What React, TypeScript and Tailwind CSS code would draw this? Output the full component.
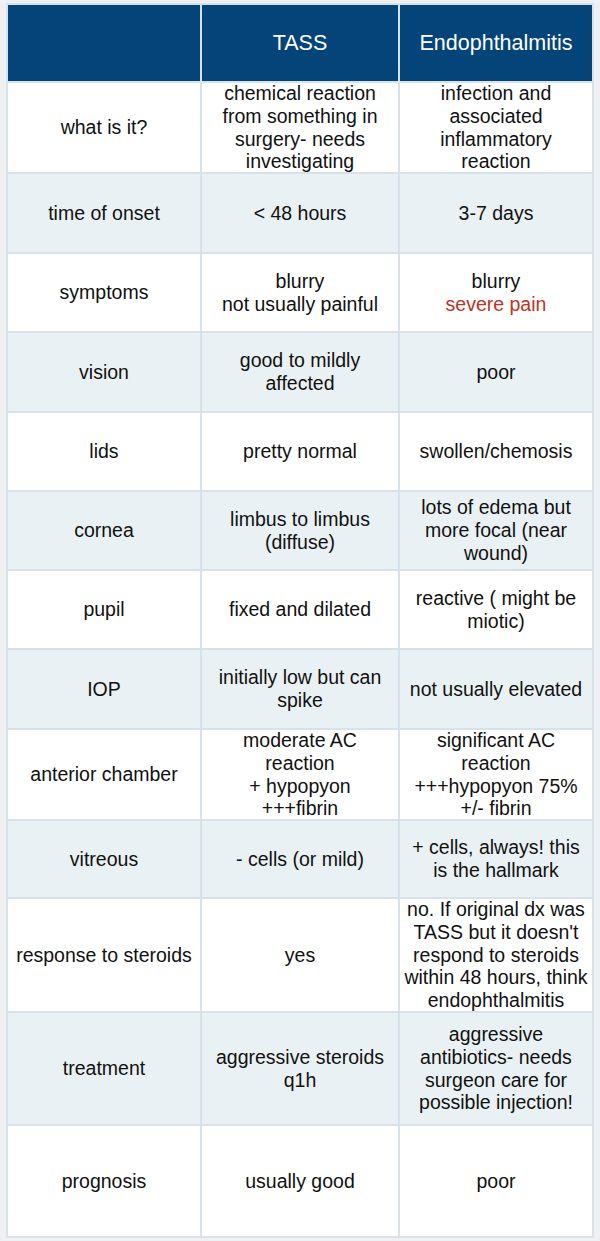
import React from "react";

type Row = {
    label: string;
    tass: React.ReactNode;
    endo: React.ReactNode;
    h: string;
};

const rows: Row[] = [
    { label: "what is it?", tass: "chemical reaction from something in surgery- needs investigating", endo: "infection and associated inflammatory reaction", h: "h-[89px]" },
    { label: "time of onset", tass: "< 48 hours", endo: "3-7 days", h: "h-[78px]" },
    {
        label: "symptoms",
        tass: (
            <>
                blurry
                <br />
                not usually painful
            </>
        ),
        endo: (
            <>
                blurry
                <br />
                <span className="text-[#c0311f]">severe pain</span>
            </>
        ),
        h: "h-[77px]",
    },
    { label: "vision", tass: "good to mildly affected", endo: "poor", h: "h-[78px]" },
    { label: "lids", tass: "pretty normal", endo: "swollen/chemosis", h: "h-[77px]" },
    { label: "cornea", tass: "limbus to limbus (diffuse)", endo: "lots of edema but more focal (near wound)", h: "h-[77px]" },
    { label: "pupil", tass: "fixed and dilated", endo: "reactive ( might be miotic)", h: "h-[77px]" },
    { label: "IOP", tass: "initially low but can spike", endo: "not usually elevated", h: "h-[78px]" },
    {
        label: "anterior chamber",
        tass: (
            <>
                moderate AC reaction
                <br />+ hypopyon
                <br />
                +++fibrin
            </>
        ),
        endo: (
            <>
                significant AC reaction
                <br />
                +++hypopyon 75%
                <br />
                +/- fibrin
            </>
        ),
        h: "h-[89px]",
    },
    { label: "vitreous", tass: "- cells (or mild)", endo: "+ cells, always! this is the hallmark", h: "h-[76px]" },
    { label: "response to steroids", tass: "yes", endo: "no. If original dx was TASS but it doesn't respond to steroids within 48 hours, think endophthalmitis", h: "h-[112px]" },
    { label: "treatment", tass: "aggressive steroids q1h", endo: "aggressive antibiotics- needs surgeon care for possible injection!", h: "h-[111px]" },
    { label: "prognosis", tass: "usually good", endo: "poor", h: "h-[110px]" },
];

function Cell({ children, bg, h, px }: { children: React.ReactNode; bg: string; h: string; px: string }) {
    return (
        <div className={`${bg} ${h} ${px} flex items-center justify-center text-center text-[19.5px] leading-[22.75px] text-[#111]`}>
            <div>{children}</div>
        </div>
    );
}

export default function App() {
    return (
        <div className="min-h-[1241px] bg-[#eef0f1] px-[6px] pt-[3px] pb-[3px] font-['Liberation_Sans',Arial,sans-serif]">
            <div className="grid grid-cols-[192px_196px_192px] gap-[2px] bg-[#d8e2ea] p-[2px]">
                <div className="h-[76px] bg-[#044478]" />
                <div className="flex h-[76px] items-center justify-center bg-[#044478] text-[21.5px] text-white">TASS</div>
                <div className="flex h-[76px] items-center justify-center bg-[#044478] text-[21.5px] text-white">Endophthalmitis</div>
                {rows.map((r, i) => {
                    const bg = i % 2 === 0 ? "bg-white" : "bg-[#eaf1f4]";
                    return (
                        <React.Fragment key={r.label}>
                            <Cell bg={bg} h={r.h} px="px-[4px]">
                                {r.label}
                            </Cell>
                            <Cell bg={bg} h={r.h} px="px-[12px]">
                                {r.tass}
                            </Cell>
                            <Cell bg={bg} h={r.h} px="px-[4px]">
                                {r.endo}
                            </Cell>
                        </React.Fragment>
                    );
                })}
            </div>
        </div>
    );
}
